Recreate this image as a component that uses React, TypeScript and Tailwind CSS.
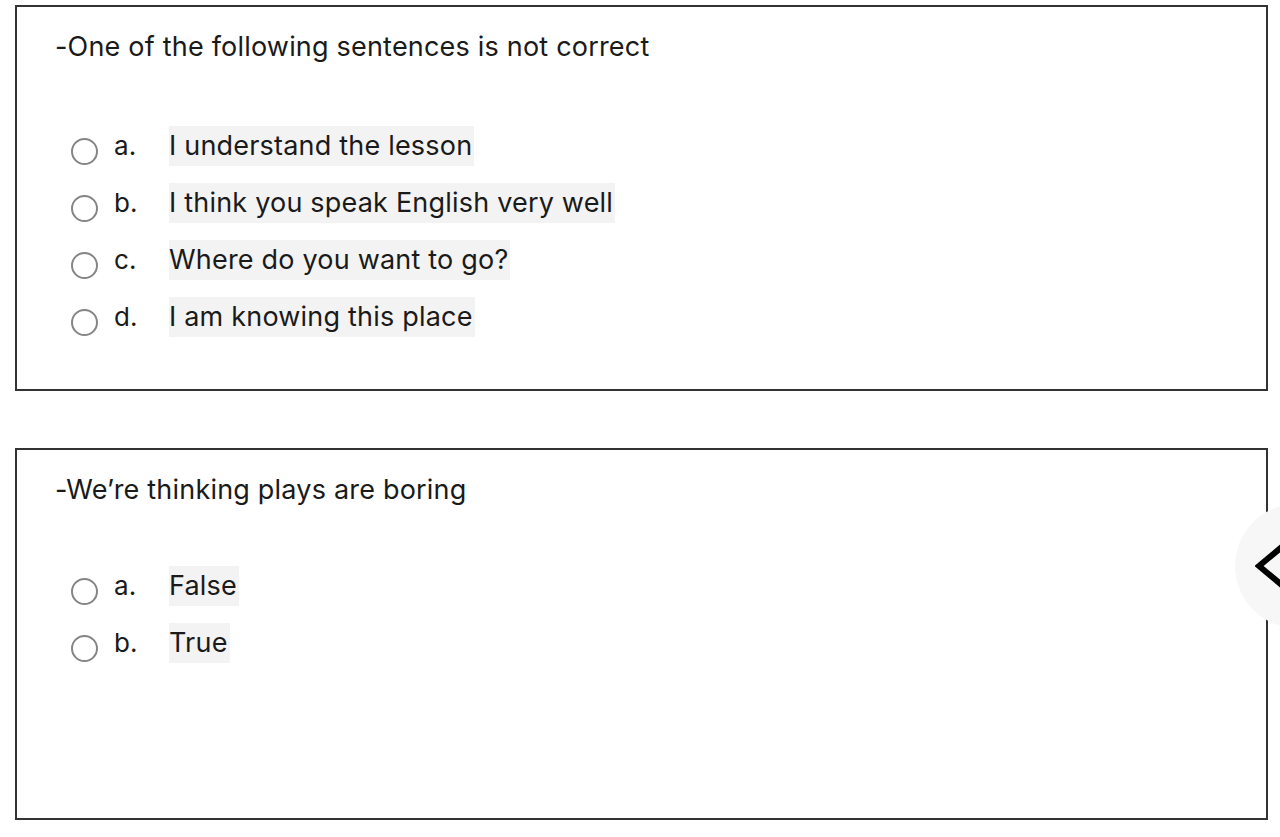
const questions = [
  {
    title: '-One of the following sentences is not correct',
    options: ['I understand the lesson', 'I think you speak English very well', 'Where do you want to go?', 'I am knowing this place'],
    height: 'h-[386px]',
    gap: 'mt-[63px]',
  },
  {
    title: '-We’re thinking plays are boring',
    options: ['False', 'True'],
    height: 'h-[372px]',
    gap: 'mt-[60px]',
  },
]

const letters = ['a.', 'b.', 'c.', 'd.']

function Radio() {
  return <span className="block w-[27px] h-[27px] rounded-full border-[2.5px] border-[#858585] bg-white shrink-0 mt-[12px]" />
}

export default function App() {
  return (
    <div className="relative w-[1280px] h-[837px] bg-white overflow-hidden text-[#1a1a1a] tracking-[0.2px]" style={{ fontFamily: 'Inter, sans-serif' }}>
      <div className="pt-[5px] pl-[15px] pr-[12px] flex flex-col gap-[57px]">
        {questions.map((q) => (
          <div key={q.title} className={`${q.height} border-2 border-[#333] pl-[38px] pt-[24px]`}>
            <p className="text-[27px] leading-[32px]">{q.title}</p>
            <div className={`${q.gap} flex flex-col gap-[17px] pl-[16px]`}>
              {q.options.map((opt, i) => (
                <label key={opt} className="flex items-start">
                  <Radio />
                  <span className="w-[71px] pl-[16px] text-[26px] leading-[40px]">{letters[i]}</span>
                  <span className="bg-[#f3f3f3] text-[27px] leading-[40px] pr-[2px]">{opt}</span>
                </label>
              ))}
            </div>
          </div>
        ))}
      </div>

      {/* side drawer toggle */}
      <div className="absolute left-[1235px] top-[504px] w-[124px] h-[124px] rounded-full bg-[#f7f7f7] flex items-center">
        <svg width="40" height="60" viewBox="0 0 40 60" className="ml-[20px]">
          <path d="M34 5 L4 30 L34 55" fill="none" stroke="#000" strokeWidth="6" />
        </svg>
      </div>
    </div>
  )
}
